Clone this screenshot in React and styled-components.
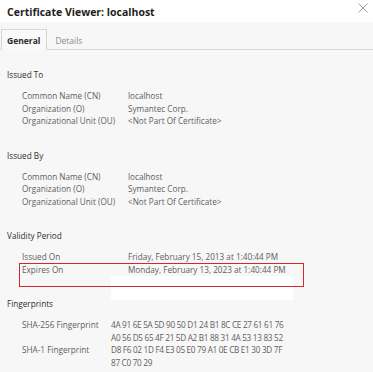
import React from 'react'
import styled, { createGlobalStyle } from 'styled-components';

const GlobalStyle = createGlobalStyle`
  html, body { margin: 0; padding: 0; background: #f7f7f7; }
  body { font-family: "Open Sans", "Noto Sans", sans-serif; }
`;

const sections = [
  {
    title: 'Issued To',
    col: 106,
    rows: [
      ['Common Name (CN)', ['localhost']],
      ['Organization (O)', ['Symantec Corp.']],
      ['Organizational Unit (OU)', ['<Not Part Of Certificate>']],
    ],
  },
  {
    title: 'Issued By',
    col: 106,
    rows: [
      ['Common Name (CN)', ['localhost']],
      ['Organization (O)', ['Symantec Corp.']],
      ['Organizational Unit (OU)', ['<Not Part Of Certificate>']],
    ],
  },
  {
    title: 'Validity Period',
    col: 106,
    rows: [
      ['Issued On', ['Friday, February 15, 2013 at 1:40:44 PM']],
      ['Expires On', ['Monday, February 13, 2023 at 1:40:44 PM'], true],
    ],
  },
  {
    title: 'Fingerprints',
    col: 89,
    hex: true,
    rows: [
      ['SHA-256 Fingerprint', ['4A 91 6E 5A 5D 90 50 D1 24 B1 8C CE 27 61 61 76', 'A0 56 D5 65 4F 21 5D A2 B1 88 31 4A 53 13 83 52']],
      ['SHA-1 Fingerprint', ['D8 F6 02 1D F4 E3 05 E0 79 A1 0E CB E1 30 3D 7F', '87 C0 70 29']],
    ],
  },
];

function App() {
  return (
    <Dialog>
      <GlobalStyle />
      <Header>
        <Title>Certificate Viewer: localhost</Title>
        <Close>
          <svg width="10" height="10" viewBox="0 0 10 10">
            <path d="M0.5 0.5 L9.5 9.5 M9.5 0.5 L0.5 9.5" stroke="#9a9a9a" strokeWidth="1" fill="none" />
          </svg>
        </Close>
      </Header>
      <Tabs>
        <Tab active>General</Tab>
        <Tab>Details</Tab>
      </Tabs>
      <Content>
        {sections.map((s) => (
          <Section key={s.title}>
            <Heading>{s.title}</Heading>
            <Rows>
              {s.rows.map(([label, lines, marked]) => (
                <Row key={label} col={s.col}>
                  {marked && <Blank />}
                  {marked && <Marker />}
                  <Label>{label}</Label>
                  <Value hex={s.hex}>
                    {lines.map((l) => <div key={l}>{l}</div>)}
                  </Value>
                </Row>
              ))}
            </Rows>
          </Section>
        ))}
      </Content>
    </Dialog>
  )
}

export default App

const Dialog = styled.div`
  width: 373px;
  height: 372px;
  overflow: hidden;
  background: #f7f7f7;
  color: #5e5e5e;
  font-size: 8.2px;
`;

const Header = styled.div`
  background: #fff;
  height: 22px;
  display: flex;
  align-items: flex-start;
  justify-content: space-between;
  padding: 0 5px 0 7px;
`;

const Title = styled.div`
  font-weight: 700;
  font-size: 10.5px;
  color: #1e1e1e;
  padding-top: 5px;
`;

const Close = styled.div`
  padding-top: 3px;
  display: flex;
`;

const Tabs = styled.div`
  display: flex;
  padding: 7px 0 0 1px;
  border-bottom: 1px solid #d6d6d6;
  height: 20px;
`;

const Tab = styled.div`
  padding: 0 6px 0 5px;
  display: flex;
  align-items: center;
  height: 20px;
  font-size: 8.5px;
  font-weight: ${(p) => (p.active ? 700 : 400)};
  color: ${(p) => (p.active ? '#2a2a2a' : '#8c8c8c')};
  border: 1px solid ${(p) => (p.active ? '#d6d6d6' : 'transparent')};
  border-bottom: none;
  background: ${(p) => (p.active ? '#f9f9f9' : 'transparent')};
  margin-bottom: -1px;
  margin-right: 2px;
`;

const Content = styled.div`
  padding: 18px 0 0 7px;
`;

const Section = styled.div`
  margin-bottom: 20.5px;
`;

const Heading = styled.div`
  color: #2e2e2e;
  line-height: 13px;
  margin-bottom: 9px;
`;

const Rows = styled.div`
  padding-left: 15px;
`;

const Row = styled.div`
  position: relative;
  display: grid;
  grid-template-columns: ${(p) => p.col}px 1fr;
  line-height: 12.67px;
  white-space: nowrap;
`;

const Label = styled.div`
  position: relative;
`;

const Value = styled.div`
  position: relative;
  letter-spacing: ${(p) => (p.hex ? '-0.3px' : '0')};
`;

const Marker = styled.div`
  position: absolute;
  box-sizing: border-box;
  left: -3px;
  top: -1px;
  width: 285px;
  height: 24px;
  border: 1px solid #d9262e;
`;

const Blank = styled.div`
  position: absolute;
  left: 89px;
  top: 12px;
  width: 182px;
  height: 24px;
  background: #fff;
`;
